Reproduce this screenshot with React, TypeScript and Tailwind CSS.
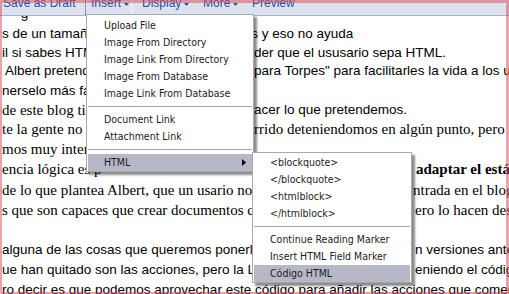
import React from 'react'

const sans = "font-['Liberation_Sans',Arial,sans-serif] text-[13.5px]"
const serif = "font-['Liberation_Serif','Times_New_Roman',serif] text-[15px]"
const serifBold = "font-['Liberation_Serif','Times_New_Roman',serif] text-[15px] font-bold"

type Line = {
  h: string
  left: string
  lf: string
  cut?: string // width of the left part when something shows on the far side of a menu
  right?: string
  rf?: string
}

const LINES: Line[] = [
  { h: 'h-[20px] leading-[20px]', left: '     g', lf: sans },
  { h: 'h-[19.5px] leading-[19.5px]', left: 's de un tamaño máximo de 500 caracteres y eso no ayuda', lf: sans },
  { h: 'h-[18.5px] leading-[18.5px]', left: 'il si sabes HTML, pero la idea del editor es no depen', lf: sans, cut: 'w-[252px]', right: 'der que el ususario sepa HTML.', rf: sans },
  { h: 'h-[18.5px] leading-[18.5px]', left: ' Albert pretende crear unas "Librerías ', lf: sans, cut: 'w-[252px]', right: 'para Torpes" para facilitarles la vida a los usuarios', rf: sans },
  { h: 'h-[19.5px] leading-[19.5px]', left: 'nerselo más fácil a los que empiezan.', lf: sans },
  { h: 'h-[20px] leading-[20px]', left: 'de este blog tiene que ser capaz de h', lf: serif, cut: 'w-[252px]', right: 'acer lo que pretendemos.', rf: sans },
  { h: 'h-[19.5px] leading-[19.5px]', left: 'te la gente no lo ha ocu', lf: serif, cut: 'w-[252px]', right: 'rrido deteniendomos en algún punto, pero la', rf: serif },
  { h: 'h-[19.5px] leading-[19.5px]', left: 'mos muy interesados en este tema.', lf: serif },
  { h: 'h-[20.5px] leading-[20.5px]', left: 'encia lógica es p', lf: serif, cut: 'w-[414px]', right: 'adaptar el estándar', rf: serifBold },
  { h: 'h-[20.5px] leading-[20.5px]', left: 'de lo que plantea Albert, que un usario no tiene que saber nada de la e', lf: serif, cut: 'w-[411px]', right: 'ntrada en el blog', rf: serif },
  { h: 'h-[20px] leading-[20px]', left: 's que son capaces que crear documentos con Word, p', lf: serif, cut: 'w-[413px]', right: 'ero lo hacen desde', rf: serif },
  { h: 'h-[20px] leading-[20px]', left: '', lf: sans },
  { h: 'h-[20px] leading-[20px]', left: 'alguna de las cosas que queremos ponerle y que ya existían e', lf: sans, cut: 'w-[413px]', right: 'n versiones anteriores', rf: sans },
  { h: 'h-[19.5px] leading-[19.5px]', left: 'ue han quitado son las acciones, pero la Librería sigue mant', lf: sans, cut: 'w-[413px]', right: 'eniendo el código', rf: sans },
  { h: 'h-[19.5px] leading-[19.5px]', left: 'ro decir es que podemos aprovechar este código para añadir las acciones que comentamos', lf: sans },
]

function Caret() {
  return (
    <svg width="5" height="3" viewBox="0 0 5 3" className="ml-[3px] mt-[3px] shrink-0">
      <path d="M0 0h5L2.5 3z" fill="#2352a8" />
    </svg>
  )
}

function Item({ label, active, sub }: { label: string; active?: boolean; sub?: boolean }) {
  return (
    <div
      className={`h-[17px] leading-[17px] mx-[1px] pl-[16px] pr-[6px] flex items-center justify-between whitespace-nowrap ${
        active ? 'bg-[#b7b8c7]' : ''
      }`}
    >
      <span>{label}</span>
      {sub && (
        <svg width="4" height="7" viewBox="0 0 4 7">
          <path d="M0 0l4 3.5L0 7z" fill="#000" />
        </svg>
      )}
    </div>
  )
}

function Sep() {
  return (
    <div className="h-[9px] flex items-center px-[1px]">
      <div className="h-px w-full bg-[#a6a6a6]" />
    </div>
  )
}

const menuCls =
  "absolute bg-white border border-[#a9a9a9] shadow-[3px_3px_2px_rgba(0,0,0,0.45)] font-['DejaVu_Sans_Condensed','Liberation_Sans',sans-serif] text-[10.5px] text-[#1c1c1c]"

export default function App() {
  return (
    <div className="relative w-[509px] h-[294px] overflow-hidden bg-white text-black">
      {/* editor toolbar, its labels run off the top */}
      <div className="relative z-10 h-[16px] bg-[#dde3ed] border-b border-[#a3b6d3] flex items-start font-['Liberation_Sans',Arial,sans-serif] text-[12px] leading-[14px] text-[#2352a8] whitespace-nowrap">
        <div className="w-[85px] pl-[3px] -mt-[4px]">Save as Draft</div>
        <div className="w-[47px] h-[15px] border-l border-l-[#8493ab] border-r border-r-[#f4f6fa] pl-[5px] flex items-start">
          <span className="-mt-[4px]">Insert</span>
          <Caret />
        </div>
        <div className="w-[61px] pl-[10px] flex items-start">
          <span className="-mt-[4px]">Display</span>
          <Caret />
        </div>
        <div className="w-[55px] pl-[10px] flex items-start">
          <span className="-mt-[4px]">More</span>
          <Caret />
        </div>
        <div className="pl-[4px] -mt-[4px]">Preview</div>
      </div>

      {/* post text, scrolled */}
      <div className="-mt-[12px] pl-[2px]">
        {LINES.map((l, i) => (
          <div key={i} className={`${l.h} flex whitespace-pre overflow-hidden`}>
            <span className={`${l.lf} ${l.cut ?? ''} shrink-0 overflow-hidden`}>{l.left}</span>
            {l.right && <span className={`${l.rf} shrink-0`}>{l.right}</span>}
          </div>
        ))}
      </div>

      {/* Insert menu */}
      <div className={`${menuCls} z-20 left-[86px] top-[14px] w-[168px] pt-[2px]`}>
        <Item label="Upload File" />
        <Item label="Image From Directory" />
        <Item label="Image Link From Directory" />
        <Item label="Image From Database" />
        <Item label="Image Link From Database" />
        <Sep />
        <Item label="Document Link" />
        <Item label="Attachment Link" />
        <Sep />
        <Item label="HTML" active sub />
      </div>

      {/* HTML submenu */}
      <div className={`${menuCls} z-20 left-[252px] top-[152px] w-[160px] pt-[1px]`}>
        <Item label="<blockquote>" />
        <Item label="</blockquote>" />
        <Item label="<htmlblock>" />
        <Item label="</htmlblock>" />
        <Sep />
        <Item label="Continue Reading Marker" />
        <Item label="Insert HTML Field Marker" />
        <Item label="Código HTML" active />
      </div>

      {/* pink frame round the capture */}
      <div className="pointer-events-none absolute inset-0 z-30 border-t-[3px] border-r-[3px] border-b-[2px] border-l-[2px] border-[rgba(220,70,85,0.5)]" />
    </div>
  )
}
